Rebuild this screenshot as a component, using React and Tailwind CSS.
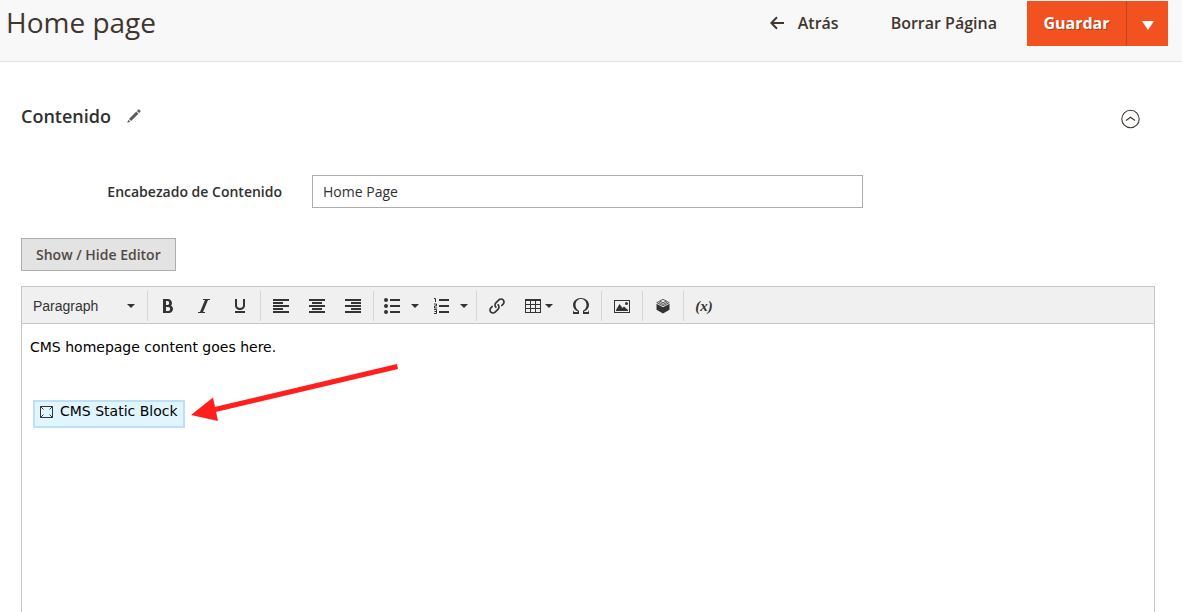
import React from "react";
import { ImBold, ImItalic, ImUnderline, ImOmega, ImLink } from "react-icons/im";

function Icon({ children }) {
  return (
    <svg width="16" height="16" viewBox="0 0 16 16" fill="currentColor" aria-hidden="true" className="shrink-0">
      {children}
    </svg>
  );
}

function Caret() {
  return (
    <svg width="8" height="4" viewBox="0 0 8 4" fill="currentColor" aria-hidden="true" className="shrink-0">
      <path d="M0 0h8L4 4z" />
    </svg>
  );
}

function Tool({ label, children }) {
  return (
    <button type="button" aria-label={label} className="flex h-full w-9 items-center justify-center">
      {children}
    </button>
  );
}

function Group({ children }) {
  return <div className="flex h-[30px] items-center border-l border-[#d5d5d5] px-0.5">{children}</div>;
}

function Header() {
  return (
    <header className="flex h-[62px] items-start justify-between border-b border-[#e3e3e3] bg-[#f8f8f8] pr-3.5 pl-1.5 text-[#41362f]">
      <h1 className="text-[28px] leading-[44px]">Home page</h1>
      <div className="flex h-[46px] items-stretch pt-px text-base font-semibold">
        <button type="button" className="flex items-center gap-3.5 px-4 pb-0.5">
          <svg width="14" height="14" viewBox="0 0 14 14" fill="none" stroke="currentColor" strokeWidth="2" aria-hidden="true">
            <path d="M14 7H1.5M7 1.3 1.3 7 7 12.7" />
          </svg>
          Atrás
        </button>
        <button type="button" className="ml-5 px-4 pb-0.5">Borrar Página</button>
        <div className="ml-3.5 flex bg-[#f15220] text-white">
          <button type="button" className="w-[100px] border-r border-[#c8421a] pb-0.5 font-bold [text-shadow:1px_1px_0_rgba(0,0,0,0.25)]">
            Guardar
          </button>
          <button type="button" aria-label="Más opciones" className="flex w-[41px] items-center justify-center pt-1">
            <svg width="12" height="9" viewBox="0 0 12 9" fill="currentColor" aria-hidden="true">
              <path d="M0 0h12L6 9z" />
            </svg>
          </button>
        </div>
      </div>
    </header>
  );
}

function Toolbar() {
  return (
    <div role="toolbar" className="flex h-[37px] items-start border-b border-[#c5c5c5] bg-[#f0f0f0] pt-1 text-[#333333]">
      <div className="flex h-[30px] px-0.5">
        <button type="button" className="flex w-[121px] items-center justify-between pr-2.5 pl-[9px] font-['Liberation_Sans',sans-serif] text-sm">
          Paragraph
          <Caret />
        </button>
      </div>
      <Group>
        <Tool label="Bold"><ImBold size={16} /></Tool>
        <Tool label="Italic"><ImItalic size={16} /></Tool>
        <Tool label="Underline"><ImUnderline size={16} /></Tool>
      </Group>
      <Group>
        <Tool label="Align left">
          <Icon><path d="M0 1h16v2H0zM0 4h10v2H0zM0 7h16v2H0zM0 10h10v2H0zM0 13h16v2H0z" /></Icon>
        </Tool>
        <Tool label="Align center">
          <Icon><path d="M0 1h16v2H0zM3 4h10v2H3zM0 7h16v2H0zM3 10h10v2H3zM0 13h16v2H0z" /></Icon>
        </Tool>
        <Tool label="Align right">
          <Icon><path d="M0 1h16v2H0zM6 4h10v2H6zM0 7h16v2H0zM6 10h10v2H6zM0 13h16v2H0z" /></Icon>
        </Tool>
      </Group>
      <Group>
        <button type="button" aria-label="Bullet list" className="flex h-full w-[49px] items-center gap-[11px] pl-2">
          <Icon>
            <path d="M6 1h10v2H6zM6 7h10v2H6zM6 13h10v2H6z" />
            <circle cx="2" cy="2" r="2" /><circle cx="2" cy="8" r="2" /><circle cx="2" cy="14" r="2" />
          </Icon>
          <Caret />
        </button>
        <button type="button" aria-label="Numbered list" className="flex h-full w-[49px] items-center gap-[11px] pl-2">
          <Icon>
            <path d="M6 1h10v2H6zM6 7h10v2H6zM6 13h10v2H6z" />
            <path d="M1 .5h1.500V4M1 6h2.500v2H1.500v2H4M1 11.500h2.500v4H1M1.500 13.500h2" fill="none" stroke="currentColor" strokeWidth="1" />
          </Icon>
          <Caret />
        </button>
      </Group>
      <Group>
        <Tool label="Link"><ImLink size={16} /></Tool>
        <button type="button" aria-label="Table" className="flex h-full w-12 items-center gap-1 pl-2.5">
          <Icon>
            <path fillRule="evenodd" d="M0 1h16v14H0zM1 3h4v3H1zM6 3h4v3H6zM11 3h4v3h-4zM1 7h4v3H1zM6 7h4v3H6zM11 7h4v3h-4zM1 11h4v3H1zM6 11h4v3H6zM11 11h4v3h-4z" />
          </Icon>
          <Caret />
        </button>
        <Tool label="Special character"><ImOmega size={16} /></Tool>
      </Group>
      <Group>
        <Tool label="Image">
          <Icon>
            <path fillRule="evenodd" d="M0 2h16v13H0zM1 3h14v11H1z" />
            <path d="M2 13V12l3.500-6 3 4 1.500-1.500 4 3.500v1z" />
            <circle cx="12.500" cy="5.500" r="1.500" />
          </Icon>
        </Tool>
      </Group>
      <Group>
        <Tool label="Insert widget">
          <Icon>
            <path d="M1.500 5.800 8 9.300l6.500-3.500v6L8 15.500l-6.500-3.700z" />
            <path d="M1.800 4.600 8 1.300l6.200 3.300L8 7.900zM4 4.400l4 2 4-2M5 3.200l3 1.500 3-1.500" fill="none" stroke="currentColor" strokeWidth=".8" />
          </Icon>
        </Tool>
      </Group>
      <Group>
        <Tool label="Insert variable">
          <span className="font-['Liberation_Serif',serif] text-[15px] font-bold italic">(x)</span>
        </Tool>
      </Group>
    </div>
  );
}

function Editor() {
  return (
    <section className="mt-[15px] flex flex-1 flex-col border border-b-0 border-[#c5c5c5]">
      <Toolbar />
      <div className="relative flex-1 px-2 pt-3 font-['DejaVu_Sans',sans-serif] text-sm text-black">
        <p className="leading-[22px]">CMS homepage content goes here.</p>
        <div className="mt-[42px] ml-[3px] flex h-7 w-fit items-start gap-1.5 border-2 border-[#bfdff8] bg-[#dff5ff] px-1 pr-[5px] leading-[18px]">
          <svg width="15" height="18" viewBox="0 0 15 18" fill="none" stroke="#333" strokeWidth="1" aria-hidden="true">
            <path d="M1.500 4.500h12M1.500 15.500h12M1.500 4.500v11M13.500 4.500v11" />
            <path d="m1.500 4.500 3 3M13.500 4.500l-3 3M1.500 15.500l3-3M13.500 15.500l-3-3" />
          </svg>
          CMS Static Block
        </div>
        <svg width="208" height="60" viewBox="0 0 208 60" aria-hidden="true" className="absolute top-[39px] left-[169px]">
          <path d="M206.500 3.500 22 47" stroke="#ff1f1c" strokeWidth="5" />
          <path d="M0 52 22 34.500l5 23.500z" fill="#ff1f1c" />
        </svg>
      </div>
    </section>
  );
}

export default function App() {
  return (
    <div className="flex min-h-screen flex-col bg-white font-['Open_Sans',sans-serif] text-[#303030]">
      <Header />
      <main className="flex flex-1 flex-col pr-[27px] pl-[21px]">
        <div className="mt-10 flex items-center justify-between pr-3.5">
          <h2 className="flex items-center gap-4 text-lg leading-7 font-semibold">
            Contenido
            <svg width="14" height="14" viewBox="0 0 14 14" fill="#5c5c5c" aria-hidden="true">
              <path d="M.3 13.700 1.200 10.700 3.300 12.800zM2 9.900l7.300-7.300 2.100 2.100L4.100 12zM10 1.900l1.300-1.300q.5-.4 1 0l1.100 1.100q.4.500 0 1l-1.300 1.300z" />
            </svg>
          </h2>
          <button type="button" aria-label="Contraer" className="pt-1.5">
            <svg width="20" height="20" viewBox="0 0 20 20" fill="none" stroke="#41362f" strokeWidth="1.100" aria-hidden="true">
              <circle cx="9.500" cy="10" r="8.700" />
              <path d="m5 11.500 4.500-3.300 4.500 3.300" />
            </svg>
          </button>
        </div>
        <div className="mt-[45px] flex items-center">
          <label htmlFor="heading" className="w-[261px] text-right text-sm font-semibold">Encabezado de Contenido</label>
          <input id="heading" type="text" defaultValue="Home Page" className="ml-[30px] h-[33px] w-[551px] border border-[#adadad] px-2.5 text-sm" />
        </div>
        <button type="button" className="mt-[30px] h-[33px] w-fit border border-[#adadad] bg-[#e3e3e3] px-3.5 text-sm font-semibold text-[#514943]">
          Show / Hide Editor
        </button>
        <Editor />
      </main>
    </div>
  );
}
